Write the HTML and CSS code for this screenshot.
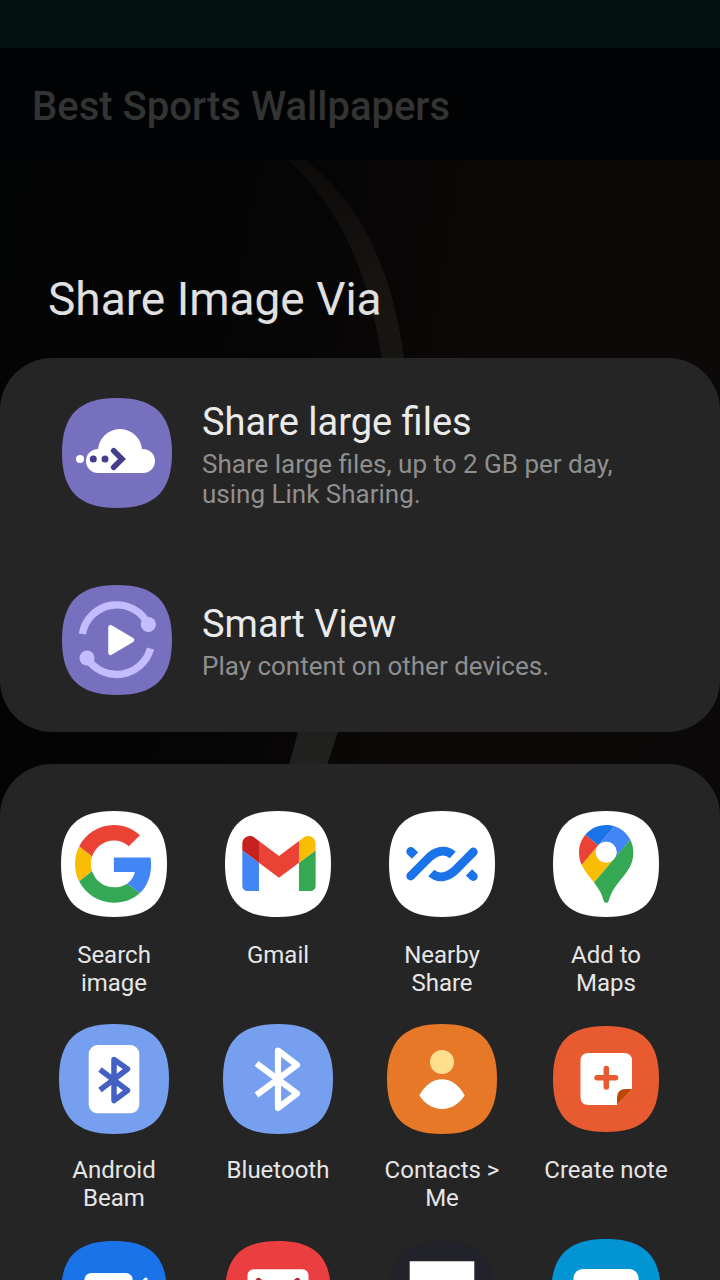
FILE: index.html
```html
<!DOCTYPE html>
<html lang="en">
<head>
<meta charset="utf-8">
<meta name="viewport" content="width=device-width, initial-scale=1">
<title>Best Sports Wallpapers</title>
<link rel="stylesheet" href="styles.css">
</head>
<body>
<svg class="defs" aria-hidden="true">
  <symbol id="tile" viewBox="-56 -56 112 112"><path d="M0-55C38-55 55-38 55 0S38 55 0 55-55 38-55 0-38-55 0-55Z"/></symbol>
  <symbol id="tile-small" viewBox="-56 -56 112 112"><path d="M0-53C37-53 53-37 53 0S37 53 0 53-53 37-53 0-37-53 0-53Z"/></symbol>
</svg>
<div class="screen">
  <div class="status-bar"></div>
  <header class="app-bar"><h1 class="app-title">Best Sports Wallpapers</h1></header>
  <main class="stage">
    <svg class="wallpaper" viewBox="0 160 720 1120" preserveAspectRatio="xMidYMin slice" aria-hidden="true">
      <defs>
        <linearGradient id="line" x1="0" y1="0" x2="0" y2="1"><stop offset="0" stop-color="#0c0b0a"/><stop offset=".2" stop-color="#161411"/><stop offset="1" stop-color="#21211f"/></linearGradient>
      </defs>
      <path fill="url(#line)" d="M288 160C337 205 367 265 382 358C396 470 360 600 298 732L285 780H322L338 732C390 600 422 470 404 358C392 270 362 205 306 160Z"/>
    </svg>
    <h2 class="share-title">Share Image Via</h2>
    <section class="panel actions">
      <button class="action" type="button">
        <svg class="icon" viewBox="-56 -56 112 112" aria-hidden="true">
          <use href="#tile" x="-56" y="-56" width="112" height="112" fill="#7770be"/>
          <circle cx="3" cy="-2" r="22" fill="#fff"/><rect x="-31" y="-4" width="69" height="24" rx="12" fill="#fff"/>
          <circle cx="-37" cy="6" r="4" fill="#fff"/>
          <g fill="#433d8c"><circle cx="-23.7" cy="6" r="3.5"/><circle cx="-12" cy="6" r="3.5"/></g>
          <path d="M-3.3-2.2 5 6-3.3 14.200" fill="none" stroke="#433d8c" stroke-width="5.6" stroke-linecap="round"/>
        </svg>
        <span class="action-text"><span class="action-name">Share large files</span><span class="action-note">Share large files, up to 2 GB per day, using Link Sharing.</span></span>
      </button>
      <button class="action" type="button">
        <svg class="icon" viewBox="-56 -56 112 112" aria-hidden="true">
          <use href="#tile" x="-56" y="-56" width="112" height="112" fill="#7770be"/>
          <g fill="none" stroke="#c3bdff" stroke-width="7.400"><path d="M-34.700-6A35 35 0 0 1 31-16"/><path d="M33.500 8.500A35 35 0 0 1-30 18"/></g>
          <g fill="#c3bdff"><circle cx="31.400" cy="-15.500" r="7.600"/><circle cx="-30" cy="18" r="7.600"/></g>
          <path d="M-6.500-12.800 15 0-6.500 12.800Z" fill="#fff" stroke="#fff" stroke-width="4.500" stroke-linejoin="round"/>
        </svg>
        <span class="action-text"><span class="action-name">Smart View</span><span class="action-note">Play content on other devices.</span></span>
      </button>
    </section>
    <section class="panel apps">
      <button class="app" type="button">
        <svg class="icon" viewBox="-56 -56 112 112" aria-hidden="true">
          <use href="#tile-small" x="-56" y="-56" width="112" height="112" fill="#fff"/>
          <g transform="translate(-39 -39) scale(1.62)">
            <path fill="#ea4335" d="M24 9.500c3.540 0 6.710 1.220 9.210 3.600l6.850-6.850C35.900 2.380 30.470 0 24 0 14.620 0 6.510 5.380 2.560 13.220l7.980 6.190C12.430 13.720 17.740 9.500 24 9.500z"/>
            <path fill="#4285f4" d="M46.980 24.550c0-1.570-.15-3.090-.38-4.550H24v9.020h12.940c-.58 2.960-2.260 5.480-4.780 7.180l7.730 6c4.510-4.180 7.090-10.360 7.090-17.650z"/>
            <path fill="#fbbc05" d="M10.530 28.590c-.48-1.450-.76-2.990-.76-4.590s.27-3.140.76-4.590l-7.980-6.190C.92 16.460 0 20.120 0 24c0 3.880.92 7.540 2.560 10.780l7.970-6.190z"/>
            <path fill="#34a853" d="M24 48c6.480 0 11.930-2.130 15.890-5.810l-7.730-6c-2.150 1.450-4.920 2.300-8.160 2.300-6.260 0-11.570-4.220-13.470-9.910l-7.980 6.190C6.510 42.620 14.620 48 24 48z"/>
          </g>
        </svg>
        <span class="app-name">Search image</span>
      </button>
      <button class="app" type="button">
        <svg class="icon" viewBox="-56 -56 112 112" aria-hidden="true">
          <use href="#tile-small" x="-56" y="-56" width="112" height="112" fill="#fff"/>
          <g transform="translate(-79 -63) scale(.833)">
            <path fill="#4285f4" d="M58 108h14V74L52 59v43c0 3.320 2.690 6 6 6"/>
            <path fill="#34a853" d="M120 108h14c3.320 0 6-2.690 6-6V59l-20 15"/>
            <path fill="#fbbc04" d="M120 48v26l20-15v-8c0-7.420-8.470-11.650-14.400-7.200"/>
            <path fill="#ea4335" d="M72 74V48l24 18 24-18v26L96 92"/>
            <path fill="#c5221f" d="M52 51v8l20 15V48l-5.600-4.200c-5.940-4.450-14.400-.22-14.400 7.200"/>
          </g>
        </svg>
        <span class="app-name">Gmail</span>
      </button>
      <button class="app" type="button">
        <svg class="icon" viewBox="-56 -56 112 112" aria-hidden="true">
          <use href="#tile-small" x="-56" y="-56" width="112" height="112" fill="#fff"/>
          <g id="strand" fill="#1a73e8"><path d="M-31.300 12-15-4.500C-6.500-13.500 3.500-15.500 10.700-9M-31.300-12.700-27-8.300" fill="none" stroke="#1a73e8" stroke-width="8.800"/><circle cx="-31.300" cy="12" r="4.400"/><circle cx="-31.300" cy="-12.500" r="4.400"/></g>
          <use href="#strand" transform="rotate(180)"/>
        </svg>
        <span class="app-name">Nearby Share</span>
      </button>
      <button class="app" type="button">
        <svg class="icon" viewBox="-56 -56 112 112" aria-hidden="true">
          <use href="#tile-small" x="-56" y="-56" width="112" height="112" fill="#fff"/>
          <g transform="translate(-27 -39) scale(.588)">
            <path fill="#1a73e8" d="M60.200 2.200C55.800.8 51 0 46.100 0 32 0 19.300 6.400 10.800 16.500l21.800 18.300L60.200 2.200z"/>
            <path fill="#ea4335" d="M10.800 16.500C4.100 24.500 0 34.900 0 46.100c0 8.700 1.700 15.700 4.600 22l28-33.300-21.800-18.300z"/>
            <path fill="#4285f4" d="M46.200 28.500c9.800 0 17.700 7.900 17.700 17.700 0 4.300-1.600 8.300-4.200 11.400 0 0 13.900-16.600 27.500-32.700-5.600-10.800-15.300-19-27-22.700L32.600 34.800c3.300-3.800 8.100-6.300 13.600-6.300"/>
            <path fill="#fbbc04" d="M46.200 63.800c-9.800 0-17.700-7.900-17.700-17.700 0-4.300 1.500-8.300 4.100-11.300l-28 33.300c4.800 10.600 12.800 19.200 21 29.900l34.100-40.500c-3.300 3.900-8.100 6.300-13.500 6.300"/>
            <path fill="#34a853" d="M59.100 109.200c15.400-24.100 33.300-35 33.300-63 0-7.700-1.900-14.900-5.200-21.300L25.600 98c2.600 3.400 5.300 7.300 7.900 11.300 9.400 14.500 6.800 23.100 12.800 23.100s3.400-8.700 12.800-23.200"/>
            <circle cx="46.200" cy="46.200" r="17.700" fill="#fff"/>
          </g>
        </svg>
        <span class="app-name">Add to Maps</span>
      </button>
      <button class="app" type="button">
        <svg class="icon" viewBox="-56 -56 112 112" aria-hidden="true">
          <use href="#tile" x="-56" y="-56" width="112" height="112" fill="#769ff0"/>
          <rect x="-25.300" y="-34" width="50.600" height="68.300" rx="9" fill="#fff"/>
          <path d="M-14-9.500 13.500 11.500 0 21.500V-19.500L13.500-10-14 11" fill="none" stroke="#4460c2" stroke-width="5.500" stroke-linejoin="round"/>
        </svg>
        <span class="app-name">Android Beam</span>
      </button>
      <button class="app" type="button">
        <svg class="icon" viewBox="-56 -56 112 112" aria-hidden="true">
          <use href="#tile" x="-56" y="-56" width="112" height="112" fill="#769ff0"/>
          <path d="M-21.500-15.500 19 14.500 0 29V-28.500L19-14-21.500 16" fill="none" stroke="#fff" stroke-width="6.200" stroke-linejoin="round"/>
        </svg>
        <span class="app-name">Bluetooth</span>
      </button>
      <button class="app" type="button">
        <svg class="icon" viewBox="-56 -56 112 112" aria-hidden="true">
          <use href="#tile" x="-56" y="-56" width="112" height="112" fill="#e67828"/>
          <circle cy="-17" r="12" fill="#ffdf8e"/>
          <path d="M-22.700 16.500C-17 6-9 .3 0 .3S17 6 22.700 16.500C17 25 9 30 0 30S-17 25-22.700 16.500Z" fill="#fff"/>
        </svg>
        <span class="app-name">Contacts &gt; Me</span>
      </button>
      <button class="app" type="button">
        <svg class="icon" viewBox="-56 -56 112 112" aria-hidden="true">
          <use href="#tile-small" x="-56" y="-56" width="112" height="112" fill="#e85b31"/>
          <path d="M-17.500-26H18Q26-26 26-18V10L11 26H-17.500Q-25.500 26-25.500 18V-18Q-25.500-26-17.500-26Z" fill="#fff"/>
          <path d="M11 26V19Q11 10 20 10H26Z" fill="#b94700"/>
          <path d="M.3-10.500V8M-9 -1.300H9.600" stroke="#e85b31" stroke-width="5.500" stroke-linecap="round"/>
        </svg>
        <span class="app-name">Create note</span>
      </button>
      <button class="app" type="button" aria-label="Video call">
        <svg class="icon" viewBox="-56 -56 112 112" aria-hidden="true">
          <use href="#tile-small" x="-56" y="-56" width="112" height="112" fill="#1a73e8"/>
          <rect x="-29.700" y="-21" width="48.500" height="42" rx="7" fill="#fff"/>
          <path d="M24-8 32-15V15L24 8Z" fill="#fff" stroke="#fff" stroke-width="3" stroke-linejoin="round"/>
        </svg>
      </button>
      <button class="app" type="button" aria-label="Email">
        <svg class="icon" viewBox="-56 -56 112 112" aria-hidden="true">
          <use href="#tile-small" x="-56" y="-56" width="112" height="112" fill="#ea3e40"/>
          <rect x="-30.500" y="-24.700" width="61" height="48" rx="6" fill="#fff"/>
          <path d="M-19.500-13 0 2 19.500-13" fill="none" stroke="#a82a38" stroke-width="6" stroke-linecap="round"/>
        </svg>
      </button>
      <button class="app" type="button" aria-label="Gallery">
        <svg class="icon" viewBox="-56 -56 112 112" aria-hidden="true">
          <use href="#tile-small" x="-56" y="-56" width="112" height="112" fill="#22222a"/>
          <path d="M-32.300-32.700H32.300V32.700H-32.300Z" fill="#fff"/>
        </svg>
      </button>
      <button class="app" type="button" aria-label="Messages">
        <svg class="icon" viewBox="-56 -56 112 112" aria-hidden="true">
          <use href="#tile" x="-56" y="-56" width="112" height="112" fill="#0394d4"/>
          <rect x="-32.500" y="-25" width="65" height="50" rx="9" fill="#fff"/>
        </svg>
      </button>
    </section>
  </main>
</div>
</body>
</html>
```
FILE: styles.css
```css
* {
  box-sizing: border-box;
}

body {
  margin: 0;
  background: #000;
  font-family: Roboto, "Liberation Sans", sans-serif;
}

.defs {
  display: none;
}

.screen {
  display: flex;
  flex-direction: column;
  height: 100vh;
  overflow: hidden;
}

.status-bar {
  flex: none;
  height: 48px;
  background: #00110f;
}

.app-bar {
  flex: none;
  padding: 35px 32px 29px;
  background: #000203;
}

.app-title {
  margin: 0;
  font-size: 40px;
  line-height: 48px;
  font-weight: 500;
  color: #323433;
}

.stage {
  position: relative;
  flex: 1;
  min-height: 0;
  background: linear-gradient(100deg, #030404, #060505 35%, #0d0908 60%, #0b0809);
}

.wallpaper {
  position: absolute;
  inset: 0;
  width: 100%;
  height: 100%;
}

.share-title {
  position: relative;
  margin: 0;
  padding: 111px 48px 31px;
  font-size: 46px;
  line-height: 56px;
  font-weight: 400;
  color: #e0e0e0;
}

.panel {
  position: relative;
  background: #252525;
  border-radius: 52px;
}

.actions {
  margin-bottom: 32px;
}

.action,
.app {
  display: flex;
  border: 0;
  background: none;
  font: inherit;
  cursor: pointer;
}

.action {
  width: 100%;
  align-items: center;
  gap: 29px;
  padding: 39px 61px 36px;
  text-align: left;
}

.icon {
  flex: none;
  width: 112px;
  height: 112px;
}

.action-text {
  display: flex;
  flex-direction: column;
  gap: 2px;
}

.action-name {
  font-size: 38px;
  line-height: 50px;
  color: #eaeaea;
}

.action-note {
  font-size: 26px;
  line-height: 30px;
  color: #8f8f8f;
}

.apps {
  display: grid;
  grid-template-columns: repeat(4, 1fr);
  row-gap: 26px;
  padding: 44px 32px;
  border-radius: 52px 52px 0 0;
}

.app {
  flex-direction: column;
  align-items: center;
  gap: 21px;
  padding: 0 16px;
}

.app-name {
  font-size: 24px;
  line-height: 28px;
  text-align: center;
  color: #e6e6e6;
}
```
